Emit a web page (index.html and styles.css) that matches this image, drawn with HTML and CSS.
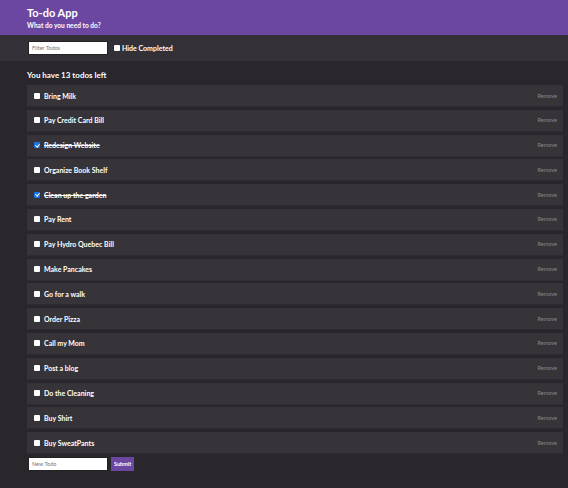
FILE: index.html
```html
<!DOCTYPE html>
<html>
<head>
<meta charset="utf-8">
<link rel="stylesheet" href="styles.css">
</head>
<body>
<header class="header">
  <h1 class="title">To-do App</h1>
  <p class="subtitle">What do you need to do?</p>
</header>
<div class="toolbar">
  <input class="text-input" type="text" placeholder="Filter Todos">
  <label class="hide"><input type="checkbox" class="native"><span class="box"></span>Hide Completed</label>
</div>
<main class="main">
  <h2 class="count">You have 13 todos left</h2>
  <ul class="list">
    <li class="item"><label class="item-label"><input type="checkbox" class="native"><span class="box"></span><span>Bring Milk</span></label><button class="remove">Remove</button></li>
    <li class="item"><label class="item-label"><input type="checkbox" class="native"><span class="box"></span><span>Pay Credit Card Bill</span></label><button class="remove">Remove</button></li>
    <li class="item"><label class="item-label"><input type="checkbox" class="native" checked><span class="box"></span><span class="done">Redesign Website</span></label><button class="remove">Remove</button></li>
    <li class="item"><label class="item-label"><input type="checkbox" class="native"><span class="box"></span><span>Organize Book Shelf</span></label><button class="remove">Remove</button></li>
    <li class="item"><label class="item-label"><input type="checkbox" class="native" checked><span class="box"></span><span class="done">Clean up the garden</span></label><button class="remove">Remove</button></li>
    <li class="item"><label class="item-label"><input type="checkbox" class="native"><span class="box"></span><span>Pay Rent</span></label><button class="remove">Remove</button></li>
    <li class="item"><label class="item-label"><input type="checkbox" class="native"><span class="box"></span><span>Pay Hydro Quebec Bill</span></label><button class="remove">Remove</button></li>
    <li class="item"><label class="item-label"><input type="checkbox" class="native"><span class="box"></span><span>Make Pancakes</span></label><button class="remove">Remove</button></li>
    <li class="item"><label class="item-label"><input type="checkbox" class="native"><span class="box"></span><span>Go for a walk</span></label><button class="remove">Remove</button></li>
    <li class="item"><label class="item-label"><input type="checkbox" class="native"><span class="box"></span><span>Order Pizza</span></label><button class="remove">Remove</button></li>
    <li class="item"><label class="item-label"><input type="checkbox" class="native"><span class="box"></span><span>Call my Mom</span></label><button class="remove">Remove</button></li>
    <li class="item"><label class="item-label"><input type="checkbox" class="native"><span class="box"></span><span>Post a blog</span></label><button class="remove">Remove</button></li>
    <li class="item"><label class="item-label"><input type="checkbox" class="native"><span class="box"></span><span>Do the Cleaning</span></label><button class="remove">Remove</button></li>
    <li class="item"><label class="item-label"><input type="checkbox" class="native"><span class="box"></span><span>Buy Shirt</span></label><button class="remove">Remove</button></li>
    <li class="item"><label class="item-label"><input type="checkbox" class="native"><span class="box"></span><span>Buy SweatPants</span></label><button class="remove">Remove</button></li>
  </ul>
  <form class="add">
    <input class="text-input" type="text" placeholder="New Todo">
    <button type="button" class="submit">Submit</button>
  </form>
</main>
</body>
</html>
```
FILE: styles.css
```css
* { box-sizing: border-box; }
html, body { margin: 0; padding: 0; }
body {
  background: #29272b;
  font-family: Lato, "Open Sans", sans-serif;
  color: #ffffff;
  height: 488px;
  overflow: hidden;
}
.header {
  background: #6b47a1;
  height: 35px;
  padding: 6px 27px 0;
}
.title {
  margin: 0;
  font-size: 11px;
  font-weight: 700;
  line-height: 13px;
}
.subtitle {
  margin: 2px 0 0;
  font-size: 6.6px;
  font-weight: 700;
  line-height: 9px;
}
.toolbar {
  background: #333137;
  height: 26px;
  display: flex;
  align-items: center;
  padding: 0 28px;
  gap: 6px;
}
.text-input {
  width: 80px;
  height: 14px;
  border: 1px solid #222;
  background: #fff;
  font-family: Lato, sans-serif;
  font-size: 5.5px;
  padding: 0 3px;
  margin: 0;
  outline: none;
}
.text-input::placeholder { color: #777; }
.hide {
  display: flex;
  align-items: center;
  gap: 2px;
  font-size: 7px;
  font-weight: 700;
}
.native {
  position: absolute;
  opacity: 0;
  width: 0;
  height: 0;
  margin: 0;
}
.box {
  position: relative;
  width: 6px;
  height: 6px;
  background: #fff;
  border-radius: 1px;
  flex: none;
}
.native:checked + .box {
  background: #1a73e8;
}
.native:checked + .box::after {
  content: "";
  position: absolute;
  left: 2px;
  top: 0.5px;
  width: 1.5px;
  height: 3.2px;
  border: solid #fff;
  border-width: 0 1px 1px 0;
  transform: rotate(40deg);
}
.main {
  padding: 9px 5px 0 27px;
}
.count {
  margin: 0 0 5px;
  font-size: 8px;
  font-weight: 700;
  line-height: 10px;
}
.list {
  list-style: none;
  margin: 0;
  padding: 0;
}
.item {
  height: 22px;
  margin-bottom: 2.8px;
  background: #363339;
  border-bottom: 1px solid #2e2c31;
  display: flex;
  align-items: center;
  justify-content: space-between;
  padding: 0 6px 0 7px;
}
.item-label {
  display: flex;
  align-items: center;
  gap: 4px;
  font-size: 7px;
  font-weight: 700;
}
.done { text-decoration: line-through; }
.remove {
  background: none;
  border: none;
  color: #8a878d;
  font-family: Lato, sans-serif;
  font-size: 5.5px;
  padding: 0;
}
.add {
  display: flex;
  align-items: center;
  gap: 3px;
  margin: 2px 0 0 1px;
}
.submit {
  background: #6b47a1;
  color: #fff;
  border: none;
  height: 14px;
  padding: 0 3px;
  font-family: Lato, sans-serif;
  font-size: 5.5px;
  font-weight: 700;
}
```
